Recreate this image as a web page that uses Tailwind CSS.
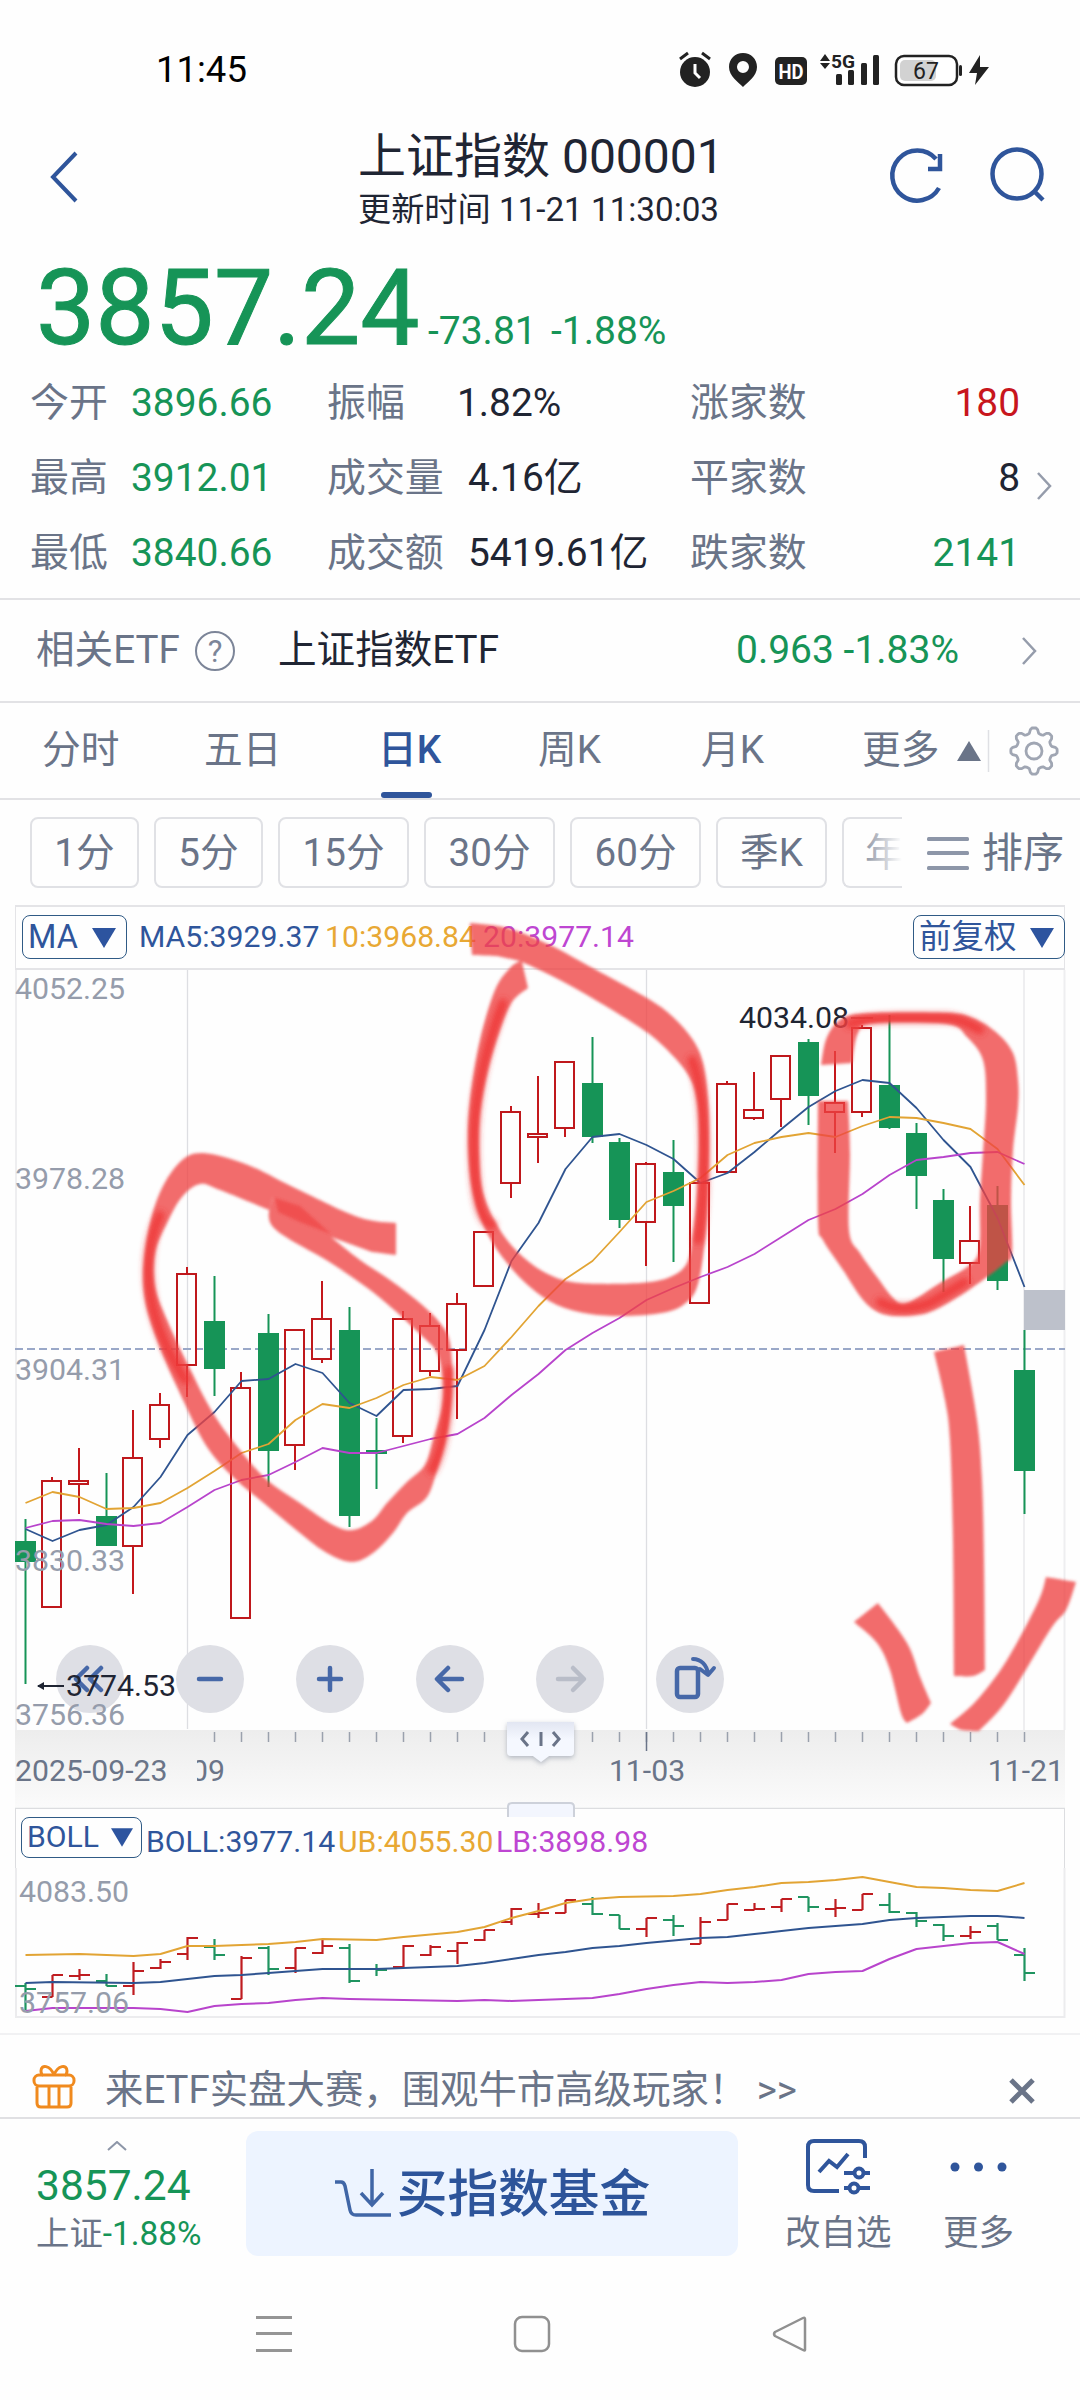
<!DOCTYPE html>
<html lang="zh-CN">
<head>
<meta charset="utf-8">
<title>上证指数 000001</title>
<script src="https://cdn.jsdelivr.net/npm/@tailwindcss/browser@4"></script>
</head>
<body class="bg-white">
<main class="relative w-[1080px] h-[2400px] overflow-hidden bg-[#fefefe] font-['Roboto','Noto_Sans_CJK_SC',sans-serif] text-[#1f2533] whitespace-nowrap flex flex-col">

  <!-- status bar -->
  <header class="h-[124px] pt-[17px] pl-[156px] pr-[88px] flex items-center justify-between shrink-0">
    <span class="text-[36.500px] text-black leading-none">11:45</span>
    <svg class="w-[320px] h-[44px]" viewBox="672 48 320 44" fill="#222">
      <ellipse cx="695" cy="71" rx="15" ry="15"/><path d="M680 58l8-6M710 58l-8-6" stroke="#222" stroke-width="3" fill="none"/><path d="M695 63v9l5 5" stroke="#fff" stroke-width="3" fill="none"/>
      <path fill-rule="evenodd" d="M743 52c-8 0-14 6-14 14 0 9 9 15 14 20 5-5 14-11 14-20 0-8-6-14-14-14zm0 8a6 6 0 1 1 0 12a6 6 0 0 1 0-12z"/>
      <rect x="775" y="56" width="32" height="28" rx="5"/><text x="791" y="78" font-size="21" font-weight="700" fill="#fff" text-anchor="middle" textLength="25" lengthAdjust="spacingAndGlyphs">HD</text>
      <path d="M820 60l5-7 5 7zM820 62l5 6 5-6z"/><text x="831" y="67" font-size="19" font-weight="700" textLength="24" lengthAdjust="spacingAndGlyphs">5G</text>
      <rect x="836" y="73" width="6" height="11" rx="1.500"/><rect x="848" y="69" width="6" height="15" rx="1.500"/><rect x="861" y="62" width="6" height="22" rx="1.500"/><rect x="873" y="54" width="6" height="30" rx="1.500"/>
      <rect x="896" y="55" width="61" height="29" rx="8" fill="#fff" stroke="#222" stroke-width="2.500"/><rect x="900" y="59" width="36" height="21" rx="5" fill="#d2d2d2"/><rect x="959" y="64" width="3" height="11" rx="1.500"/>
      <text x="926" y="78" font-size="23" text-anchor="middle">67</text>
      <path d="M980 54l-11 18h8l-2 12 14-18h-9z"/>
    </svg>
  </header>

  <!-- title bar -->
  <section class="h-[116px] shrink-0 flex items-start pl-[48px] pr-[32px]">
    <svg class="w-[32px] h-[54px] mt-[26px]" viewBox="0 0 32 54" fill="none" stroke="#2f559b" stroke-width="4"><path d="M28 3L5 27l23 24"/></svg>
    <div class="flex flex-col ml-[278px] pt-[2px]">
      <h1 class="text-[48px] leading-[62px]">上证指数 000001</h1>
      <p class="text-[33.200px] leading-[44px]">更新时间 11-21 11:30:03</p>
    </div>
    <svg class="w-[162px] h-[62px] mt-[21px] ml-auto" viewBox="886 144 162 62" fill="none" stroke="#2f559b" stroke-width="4.500"><path d="M936 158A25 25 0 1 0 939 187M940 153v15h-12"/><circle cx="1017" cy="173" r="24.500"/><path d="M1034 190l9 9"/></svg>
  </section>

  <!-- price -->
  <section class="h-[125px] shrink-0 flex items-baseline pl-[36px] text-[#169457]">
    <strong class="text-[105.500px] leading-[136px] font-normal w-[392px] [-webkit-text-stroke:1px_#169457]">3857.24</strong>
    <span class="text-[39px] w-[123px]">-73.81</span><span class="text-[39px]">-1.88%</span>
  </section>

  <!-- quote grid -->
  <section class="relative h-[233px] shrink-0 pl-[30px] pt-px">
    <div class="grid grid-cols-[101px_196px_130px_233px_330px] grid-rows-[75px_75px_75px] items-center text-[38.900px] leading-none text-[#6a7488]">
      <span>今开</span><span class="text-[#169457]">3896.66</span><span>振幅</span><span class="text-[#1f2533]">1.82%</span><div class="flex justify-between"><span>涨家数</span><span class="text-[#c8161d]">180</span></div>
      <span>最高</span><span class="text-[#169457]">3912.01</span><span>成交量</span><span class="text-[#1f2533] pl-[11px]">4.16亿</span><div class="flex justify-between"><span>平家数</span><span class="text-[#1f2533]">8</span></div>
      <span>最低</span><span class="text-[#169457]">3840.66</span><span>成交额</span><span class="text-[#1f2533] pl-[11px]">5419.61亿</span><div class="flex justify-between"><span>跌家数</span><span class="text-[#169457]">2141</span></div>
    </div>
    <svg class="absolute left-[1034px] top-[106px] w-[20px] h-[30px]" viewBox="0 0 20 30" fill="none" stroke="#959cab" stroke-width="2.500"><path d="M4 2l12 13L4 28"/></svg>
  </section>

  <!-- related ETF -->
  <section class="h-[105px] shrink-0 border-y-2 border-[#e2e2e5] flex items-center pl-[36px] pr-[41px] text-[38.600px] leading-none">
    <span class="text-[#6a7488] w-[158px]">相关ETF</span>
    <svg class="w-[42px] h-[42px]" viewBox="0 0 42 42"><circle cx="21" cy="21" r="19" fill="none" stroke="#7c8598" stroke-width="2"/><text x="21" y="32" font-size="31" text-anchor="middle" fill="#7c8598">?</text></svg>
    <span class="ml-[42px]">上证指数ETF</span>
    <span class="ml-auto text-[39px] text-[#169457]">0.963 -1.83%</span>
    <svg class="w-[20px] h-[30px] ml-[60px]" viewBox="0 0 20 30" fill="none" stroke="#959cab" stroke-width="2.500"><path d="M4 2l12 13L4 28"/></svg>
  </section>

  <!-- period tabs -->
  <nav class="h-[97px] shrink-0 border-b-2 border-[#e2e2e5] flex text-[38.700px] leading-[94px] text-[#6a7488]">
    <span class="w-[162px] ml-[42px]">分时</span><span class="w-[174px]">五日</span>
    <span class="relative w-[160px] font-medium text-[#2f559b]">日K<i class="absolute left-[3px] bottom-0 w-[51px] h-[6px] rounded-full bg-[#2f559b]"></i></span>
    <span class="w-[163px]">周K</span><span class="w-[161px]">月K</span><span class="w-[88px]">更多</span>
    <svg class="w-[110px] h-[60px] mt-[18px] shrink-0" viewBox="950 721 110 60" fill="none" stroke="#a0a6b3" stroke-width="2.800">
      <path d="M957 761h24l-12-20z" fill="#6a7488" stroke="none"/><path d="M988.500 730v42" stroke="#dfe0e4" stroke-width="1.500"/>
      <path id="gear" stroke-linejoin="round"/><circle cx="1034" cy="751" r="8"/>
    </svg>
  </nav>

  <!-- minute chips -->
  <section class="relative h-[105px] shrink-0 flex items-center gap-[15px] pl-[30px] text-[38.600px] leading-none text-[#6a7488]">
    <span class="flex w-[109px] h-[71px] pt-[2px] items-center justify-center rounded-lg border-2 border-[#e0e1e5] shrink-0">1分</span>
    <span class="flex w-[109px] h-[71px] pt-[2px] items-center justify-center rounded-lg border-2 border-[#e0e1e5] shrink-0">5分</span>
    <span class="flex w-[131px] h-[71px] pt-[2px] items-center justify-center rounded-lg border-2 border-[#e0e1e5] shrink-0">15分</span>
    <span class="flex w-[131px] h-[71px] pt-[2px] items-center justify-center rounded-lg border-2 border-[#e0e1e5] shrink-0">30分</span>
    <span class="flex w-[131px] h-[71px] pt-[2px] items-center justify-center rounded-lg border-2 border-[#e0e1e5] shrink-0">60分</span>
    <span class="flex w-[111px] h-[71px] pt-[2px] items-center justify-center rounded-lg border-2 border-[#e0e1e5] shrink-0">季K</span>
    <span class="relative flex w-[60px] h-[71px] pt-[2px] items-center pl-[21px] rounded-l-lg border-2 border-r-0 border-[#e0e1e5] shrink-0 overflow-hidden">年<i class="absolute -inset-y-1 right-0 w-[50px] bg-linear-to-r from-[#fefefe]/0 to-[#fefefe]"></i></span>
    <svg class="w-[42px] h-[34px] ml-[10px] shrink-0" viewBox="0 0 42 34" fill="#8d96a8"><rect width="42" height="4" y="1" rx="1.500"/><rect width="42" height="4" y="15" rx="1.500"/><rect width="42" height="4" y="30" rx="1.500"/></svg>
    <span class="text-[41px] -ml-[2px] pt-[2px]">排序</span>
  </section>

  <!-- K-line panel -->
  <section class="h-[65px] mx-[15px] shrink-0 border-t-2 border-x border-b-2 border-[#e4e4e7] flex items-center pl-[6px] pb-[2px] text-[30.200px] leading-none text-[#2f559b]">
    <span class="w-[105px] h-[44px] mt-px pt-px rounded-lg border-[1.500px] border-[#2f5a85] flex items-center justify-between pl-[5px] pr-[10px] text-[32.500px]">MA<svg class="w-[24px] h-[20px]" viewBox="0 0 24 20" fill="#2d549f"><path d="M0 0h24L12 20z"/></svg></span>
    <span class="ml-[12px] w-[186px] pt-[2px]">MA5:3929.37</span><span class="w-[158px] pt-[2px] text-[#e8a834]">10:3968.84</span><span class="pt-[2px] text-[#be46d2]">20:3977.14</span>
    <span class="ml-auto -mr-px w-[152px] h-[44px] mt-px pt-px rounded-lg border-[1.500px] border-[#2f5a85] flex items-center justify-between pl-[5px] pr-[10px] text-[32.500px]">前复权<svg class="w-[24px] h-[20px]" viewBox="0 0 24 20" fill="#2d549f"><path d="M0 0h24L12 20z"/></svg></span>
  </section>
  <svg class="w-[1080px] h-[839px] shrink-0" viewBox="0 970 1080 839">
    <defs>
      <linearGradient id="axis" x2="0" y2="1"><stop stop-color="#ededed"/><stop offset="1" stop-color="#fbfbfb"/></linearGradient>
      <linearGradient id="grip" x2="0" y2="1"><stop stop-color="#e2e6f2"/><stop offset=".45" stop-color="#f5f8ff"/></linearGradient>
      <filter id="shadow" x="-20%" y="-30%" width="140%" height="180%"><feDropShadow dx="0" dy="2" stdDeviation="2.500" flood-color="#8890a0" flood-opacity=".6"/></filter>
      <clipPath id="dateclip"><rect x="197" y="1750" width="60" height="40"/></clipPath>
    </defs>
    <path d="M16 970v760M1064.500 970v760M1024 970v760" stroke="#eeeef0" stroke-width="2"/>
    <path d="M187.500 970v759M646.500 970v759" stroke="#dddee2" stroke-width="1.300"/>
    <path d="M15 1349h1050" stroke="#9aa8c8" stroke-width="2" stroke-dasharray="8 4"/>
    <rect x="1024" y="1290" width="41" height="40" fill="#bdc1cb"/>
    <g id="candles"></g>
    <g fill="none" stroke-width="1.800" stroke-linejoin="round"><path id="ma5" stroke="#2f5490"/><path id="ma10" stroke="#e2a434"/><path id="ma20" stroke="#b844cc"/></g>
    <g fill="#deDFe5"><circle cx="90" cy="1679" r="34"/><circle cx="210" cy="1679" r="34"/><circle cx="330" cy="1679" r="34"/><circle cx="450" cy="1679" r="34"/><circle cx="570" cy="1679" r="34"/><circle cx="690" cy="1679" r="34"/></g>
    <g fill="#959cab" font-size="30.300"><text x="15" y="999">4052.25</text><text x="15" y="1189">3978.28</text><text x="15" y="1380">3904.31</text><text x="15" y="1571">3830.33</text><text x="15" y="1725">3756.36</text></g>
    <g fill="none" stroke="#4668a8" stroke-width="4.500" stroke-linecap="round" stroke-linejoin="round">
      <path d="M87 1668l-11 11 11 11M101 1668l-11 11 11 11M199 1679h22M319 1679h22M330 1668v22M462 1679h-24M448 1668l-11 11 11 11"/>
      <path d="M558 1679h24M573 1668l11 11-11 11" stroke="#b9bdc8"/>
      <rect x="677" y="1668" width="21" height="29" rx="3"/><path d="M693 1659c8 0 14 6 15 15M700 1669l8 6 6-7" stroke-width="4"/>
    </g>
    <g fill="#1f2533" font-size="30.300"><text x="739" y="1028">4034.08</text><text x="66" y="1696">3774.53</text></g>
    <path d="M38 1686h26" stroke="#1f2533" stroke-width="2"/><path d="M37 1686l7-4v8z" fill="#1f2533"/>
    <path d="M851 1018h22" stroke="#7f2d2d" stroke-width="1.500"/>

    <rect x="15" y="1730" width="1050" height="79" fill="url(#axis)"/>
    <path id="ticks" stroke="#9aa1ad" stroke-width="1.500"/><path d="M646.500 1732v19" stroke="#6a7488" stroke-width="1.500"/>
    <g fill="#6a7488" font-size="30.200"><text x="15" y="1781">2025-09-23</text><text x="225" y="1781" text-anchor="end" clip-path="url(#dateclip)">10-09</text><text x="647" y="1781" text-anchor="middle">11-03</text><text x="1064" y="1781" text-anchor="end">11-21</text></g>
    <path d="M15 1808.500h1050" stroke="#dcdde0" stroke-width="1.300"/>
    <path filter="url(#shadow)" fill="url(#grip)" d="M507 1722h67v30q0 4-4 4h-21l-8 6-8-6h-22q-4 0-4-4z"/>
    <path d="M528 1732l-6 7 6 7M541 1732v14M553 1732l6 7-6 7" fill="none" stroke="#6a7488" stroke-width="3"/>
  </svg>

  <!-- BOLL panel -->
  <section class="relative h-[59px] mx-[15px] shrink-0 border-x border-[#dcdde0] flex items-start pl-[5px] text-[30.200px] leading-none text-[#2f559b]">
    <svg class="absolute left-[485px] -top-[8px] w-[80px] h-[16px]" viewBox="0 0 80 16"><path d="M7 16V6q0-4 4-4h58q4 0 4 4v10z" fill="#f3f6fe"/><path d="M7 16V6q0-4 4-4h58q4 0 4 4v10" fill="none" stroke="#cdd1da" stroke-width="2"/></svg>
    <span class="w-[121px] h-[41px] mt-[8px] rounded-lg border-[1.500px] border-[#2f5a85] flex items-center justify-between pl-[5px] pr-[8px]">BOLL<svg class="w-[22px] h-[19px]" viewBox="0 0 24 20" fill="#2d549f"><path d="M0 0h24L12 20z"/></svg></span>
    <span class="ml-[4px] mt-[18px] w-[192px]">BOLL:3977.14</span><span class="mt-[18px] w-[158px] text-[#e8a834]">UB:4055.30</span><span class="mt-[18px] text-[#be46d2]">LB:3898.98</span>
  </section>
  <svg class="w-[1080px] h-[165px] shrink-0" viewBox="0 1868 1080 165">
    <path d="M16 1868v149h1048.500v-149" fill="none" stroke="#ececee" stroke-width="2"/>
    <g id="bars" fill="none" stroke-width="2.200"></g>
    <g fill="none" stroke-width="2" stroke-linejoin="round"><path id="ub" stroke="#e2a434"/><path id="mid" stroke="#2f5490"/><path id="lb" stroke="#b844cc"/></g>
    <g fill="#959cab" font-size="30.300"><text x="19" y="1902">4083.50</text><text x="19" y="2013">3757.06</text></g>
  </svg>

  <!-- promotion -->
  <section class="h-[86px] shrink-0 border-y-2 border-t-[#f1f1f3] border-b-[#e0e0e3] pt-[22px] flex items-start pl-[32px] pr-[44px] text-[38.400px] leading-none text-[#6a7488]">
    <svg class="w-[44px] h-[48px] mt-[6px]" viewBox="32 2063 44 48" fill="none" stroke="#f08a1e" stroke-width="3"><rect x="34" y="2075" width="40" height="11" rx="5"/><path d="M37 2087v16q0 4 4 4h26q4 0 4-4v-16M49 2087v19M59 2087v19M54 2075c-4-10-13-11-13-4 0 2 1 4 2 4M54 2075c4-10 13-11 13-4 0 2-1 4-2 4"/></svg>
    <span class="ml-[29px] mt-[14px]">来ETF实盘大赛，围观牛市高级玩家！ &gt;&gt;</span>
    <svg class="w-[28px] h-[28px] ml-auto mt-[20px]" viewBox="0 0 28 28" stroke="#6a7488" stroke-width="5"><path d="M3 3l22 22M25 3L3 25"/></svg>
  </section>

  <!-- action bar -->
  <section class="h-[137px] shrink-0 flex items-start pl-[36px]">
    <div class="w-[210px] text-[#169457] leading-none pt-[22px]">
      <svg class="w-[20px] h-[10px] ml-[71px]" viewBox="0 0 20 10" fill="none" stroke="#8d96a8" stroke-width="2"><path d="M1 9l9-8 9 8"/></svg>
      <div class="text-[42.500px] leading-[48px] mt-[11px]">3857.24</div>
      <div class="text-[33.400px] leading-[44px] mt-[2px]"><span class="text-[#6a7488]">上证</span>-1.88%</div>
    </div>
    <button class="w-[492px] h-[125px] mt-[12px] pt-[3px] rounded-xl bg-[#edf4ff] flex items-center justify-center text-[50.700px] leading-none font-medium text-[#2d549a]">
      <svg class="w-[58px] h-[50px] mr-[5px] -mt-[4px]" viewBox="332 2168 58 50" fill="none" stroke="#4066a6" stroke-width="3.500"><path d="M333 2182h6q3 0 4 4l5 24q1 5 6 5h35M370 2169v34M359 2193l11 12 11-12"/></svg>买指数基金
    </button>
    <div class="ml-[47px] w-[107px] flex flex-col text-[35.500px] leading-none text-[#6a7488]">
      <svg class="w-[70px] h-[60px] ml-[18px] mt-[18px]" viewBox="803 2138 70 60" fill="none" stroke="#2f559b" stroke-width="4"><path d="M839 2192h-25q-6 0-6-6v-38q0-6 6-6h45q6 0 6 6v11M819 2173l10-11 8 6 11-13"/><circle cx="859" cy="2174" r="4.500"/><path d="M844 2174h10M864 2174h6"/><circle cx="854" cy="2189" r="4.500"/><path d="M844 2189h5M859 2189h11"/></svg>
      <span class="mt-[19px]">改自选</span>
    </div>
    <div class="ml-[51px] flex flex-col text-[35.500px] leading-none text-[#6a7488]">
      <svg class="w-[60px] h-[60px] ml-[5px] mt-[18px]" viewBox="948 2138 60 60" fill="#2f559b"><circle cx="955" cy="2168" r="4.500"/><circle cx="978.500" cy="2168" r="4.500"/><circle cx="1002" cy="2168" r="4.500"/></svg>
      <span class="mt-[19px]">更多</span>
    </div>
  </section>

  <!-- system navigation -->
  <footer class="flex-1 flex justify-between pt-[58px] pl-[256px] pr-[271px]">
    <svg class="w-[36px] h-[40px]" viewBox="0 0 36 40" fill="#959595"><rect y="2" width="36" height="3"/><rect y="18" width="36" height="3"/><rect y="35" width="36" height="3"/></svg>
    <svg class="w-[40px] h-[40px]" viewBox="0 0 40 40" fill="none" stroke="#909090" stroke-width="2.500"><rect x="3" y="3" width="34" height="34" rx="7"/></svg>
    <svg class="w-[38px] h-[40px]" viewBox="0 0 38 40" fill="none" stroke="#909090" stroke-width="2.500" stroke-linejoin="round"><path d="M34 5v31q0 1-2 0L4 22q-2-2 0-4L32 4q2-1 2 1z"/></svg>
  </footer>

  <!-- hand-drawn highlighter marks over the chart -->
  <svg class="absolute left-0 top-[900px] w-[1080px] h-[860px] pointer-events-none" viewBox="0 900 1080 860">
    <defs><filter id="soft" x="-5%" y="-5%" width="110%" height="110%"><feGaussianBlur stdDeviation="1.800"/></filter><filter id="softer" x="-40%" y="-40%" width="180%" height="180%"><feGaussianBlur stdDeviation="3"/></filter></defs>
    <g id="marks" fill="#ee4242" fill-opacity=".78" fill-rule="nonzero" filter="url(#soft)"></g>
    <g fill="none" stroke="#ee3434" stroke-opacity=".85" stroke-width="9" stroke-linecap="round" filter="url(#softer)">
      <path d="M160 1215Q144 1250 150 1292T185 1380M449 1370Q448 1440 432 1470M503 1003Q473 1080 474 1150T492 1225M692 1060Q704 1090 704 1150T698 1240M850 1024Q865 1018 900 1018H948Q962 1019 980 1030M880 1302Q900 1314 930 1303L965 1282"/>
    </g>
    <path d="M275 1198L300 1206 331 1234 300 1222 278 1212z" fill="#ee3c3c" fill-opacity=".6" filter="url(#soft)"/>
  </svg>
</main>
<script>
const X = i => 25.5 + 27 * i;
const el = id => document.getElementById(id);
// direction, high, body top, body bottom, low
const candles = [
['G',1519,1541,1562,1684],['R',1477,1480,1608,1608],['R',1448,1480,1485,1514],['G',1473,1516,1546,1546],['R',1410,1457,1547,1594],['R',1393,1404,1440,1448],['R',1267,1273,1366,1397],['G',1276,1321,1369,1396],['R',1372,1387,1619,1619],['G',1314,1333,1451,1487],['R',1329,1329,1446,1470],['R',1281,1318,1360,1363],['G',1307,1330,1516,1527],['G',1418,1450,1454,1489],['R',1311,1318,1437,1443],['R',1313,1325,1372,1376],['R',1293,1303,1351,1419],['R',1231,1231,1287,1287],['R',1106,1111,1184,1198],['R',1076,1133,1138,1163],['R',1061,1061,1129,1137],['G',1037,1083,1137,1143],['G',1138,1142,1220,1228],['R',1162,1163,1223,1266],['G',1140,1172,1206,1262],['R',1182,1182,1304,1304],['R',1081,1083,1173,1173],['R',1072,1109,1119,1120],['R',1055,1055,1100,1127],['G',1039,1042,1096,1125],['R',1051,1102,1113,1153],['R',1025,1027,1113,1117],['G',1015,1085,1128,1129],['G',1123,1133,1176,1209],['G',1189,1200,1259,1292],['R',1206,1240,1264,1284],['G',1186,1205,1281,1290],['G',1330,1370,1471,1514]];
el('candles').innerHTML = candles.map(([c,h,t,b,l],i) => {
  const x = X(i);
  if (c === 'G') return `<path d="M${x} ${h}V${l}" stroke="#169457" stroke-width="2"/><rect x="${x-10.5}" y="${t}" width="21" height="${b-t}" fill="#169457"/>`;
  const r = x - .5;
  return `<path d="M${r} ${h}V${t}M${r} ${b}V${l}" stroke="#c4181c" stroke-width="2"/><rect x="${r-10}" y="${t+1}" width="19" height="${Math.max(b-t-2,2)}" fill="none" stroke="#bf181c" stroke-width="2"/>`;
}).join('');
const line = (id, ys) => el(id).setAttribute('d', 'M' + ys.map((y,i) => y === 0 ? '' : X(i)+' '+y).filter(Boolean).join('L'));
line('ma5',[1529,1541,1530,1525,1507,1477,1435,1412,1381,1379,1364,1373,1403,1416,1390,1389,1386,1330,1261,1223,1169,1137,1134,1145,1159,1183,1173,1152,1129,1107,1091,1080,1083,1108,1140,1167,1218,1287]);
line('ma10',[1503,1492,1497,1509,1508,1503,1488,1471,1453,1444,1420,1404,1408,1398,1385,1377,1380,1366,1337,1306,1279,1261,1232,1202,1191,1178,1155,1143,1137,1133,1137,1126,1117,1118,1123,1129,1149,1185]);
line('ma20',[1528,1521,1520,1524,1526,1523,1507,1490,1480,1475,1462,1448,1453,1453,1446,1439,1434,1418,1395,1374,1350,1333,1318,1300,1288,1277,1267,1254,1237,1220,1209,1194,1175,1160,1157,1153,1152,1164]);
line('ub',[1955,0,1954,0,1956,1954,1946,1946,1945,1944,1942,1939,0,1940,1937,0,1932,1927,1918,1911,1903,1899,1897,0,1896,1894,1890,1887,1883,1882,1880,1877,1882,1887,1888,1890,1891,1883]);
line('mid',[1983,1982,0,0,1983,1982,1979,1976,1975,1973,1971,1969,0,1969,1968,0,1966,1963,1959,1955,1952,1948,1946,1943,0,1938,1937,1934,1931,1928,1926,1924,1920,1918,1917,1916,1916,1918]);
line('lb',[2011,2008,0,0,2008,2009,2012,2006,2004,2003,2000,1998,1999,0,2000,0,2001,2000,2001,2000,1999,1998,1994,1989,1985,1982,1983,1982,1980,1974,1972,1971,1959,1949,1946,1943,1942,1954]);
// high, low, open, close
const bars = [[1983,2010,1986,1989],[1975,1997,1997,1975],[1969,1980,1976,1975],[1974,1986,1981,1986],[1962,1995,1986,1971],[1959,1969,1968,1962],[1937,1960,1954,1938],[1939,1960,1947,1955],[1956,1999,1999,1958],[1946,1975,1948,1969],[1948,1973,1968,1948],[1940,1954,1953,1946],[1944,1983,1948,1981],[1964,1976,1969,1970],[1945,1968,1967,1946],[1945,1956,1955,1947],[1942,1964,1951,1943],[1930,1941,1940,1930],[1908,1925,1922,1909],[1903,1918,1914,1913],[1900,1913,1913,1900],[1897,1915,1904,1914],[1915,1929,1915,1929],[1918,1937,1929,1918],[1915,1936,1920,1926],[1917,1944,1944,1922],[1904,1920,1920,1904],[1903,1910,1910,1909],[1899,1912,1907,1899],[1897,1912,1897,1907],[1899,1917,1909,1908],[1894,1910,1910,1894],[1893,1913,1905,1912],[1912,1927,1913,1921],[1924,1941,1925,1936],[1926,1939,1936,1932],[1923,1940,1926,1940],[1948,1981,1955,1973]];
el('bars').innerHTML = bars.map(([h,l,o,c],i) => `<path stroke="${candles[i][0]==='G'?'#1f9460':'#bf1c20'}" d="M${X(i)} ${h}V${l}M${X(i)-10.5} ${o}h10.500M${X(i)} ${c}h10.500"/>`).join('');
let t = ''; for (let i = 7; i < 38; i++) t += `M${X(i)} 1732v10`; el('ticks').setAttribute('d', t);
// eight-toothed gear outline
let g = []; for (let a = 0; a <= 360; a += 5) { const r = 20.5 + 2.8*Math.tanh(2.2*Math.cos(a*8*Math.PI/180)), p = a*Math.PI/180; g.push((1034+r*Math.sin(p)).toFixed(1)+' '+(751-r*Math.cos(p)).toFixed(1)); }
el('gear').setAttribute('d', 'M'+g.join('L')+'z');
// smooth curve through points; corners are marked by starting a new run
const run = (p, first) => { let d = (first ? 'M' : 'L') + p[0]; for (let i = 0; i < p.length-1; i++) { const a=p[i-1]||p[i], b=p[i], c=p[i+1], e=p[i+2]||c; d += `C${b[0]+(c[0]-a[0])/6} ${b[1]+(c[1]-a[1])/6} ${c[0]-(e[0]-b[0])/6} ${c[1]-(e[1]-b[1])/6} ${c[0]} ${c[1]}`; } return d; };
const marks = [
 [[[396,1223],[358,1217],[293,1187],[248,1165],[203,1153],[179,1163],[158,1197],[146,1245],[144,1293],[157,1340],[183,1400],[207,1447],[233,1477],[260,1500],[300,1533],[327,1553],[352,1562],[373,1553],[393,1533],[407,1513],[427,1497],[437,1470],[447,1433],[452,1387],[450,1343],[440,1323],[420,1303],[390,1280],[360,1260],[331,1237]],
  [[372,1252],[396,1255]]],
 [[[470,923],[507,928],[550,945],[587,965],[647,998],[673,1017],[693,1040],[703,1063],[708,1100],[709,1150],[707,1217],[703,1257],[697,1287],[687,1302],[667,1312],[627,1316],[590,1314],[557,1305],[530,1287],[507,1263],[487,1233],[473,1193],[468,1147],[470,1100],[480,1040],[495,990],[510,968],[520,961]],[[497,956],[472,955]]],
 [[[821,1065],[827,1037],[843,1018],[873,1013],[947,1013],[973,1018],[997,1033],[1013,1053],[1018,1080],[1018,1107],[1013,1150],[1011,1200],[1012,1253],[1005,1263],[983,1280],[953,1300],[927,1313],[900,1316],[880,1313],[863,1300],[843,1270],[823,1240],[818,1220],[818,1101]],[[848,1101],[850,1153],[849,1230],[860,1253],[877,1277],[893,1298],[903,1304],[917,1298],[940,1283],[967,1267],[979,1250],[980,1200],[983,1153],[986,1100],[983,1060],[967,1037],[947,1024],[873,1023],[858,1033],[852,1063]]],
 [[[934,1352],[964,1345]],[[964,1345],[977,1420],[982,1480],[984,1560],[985,1670]],[[985,1670],[973,1676],[954,1676]],[[954,1676],[953,1540],[950,1440],[945,1400],[934,1352]]],
 [[[854,1622],[878,1603]],[[878,1603],[907,1643],[920,1677],[931,1703]],[[931,1703],[922,1714],[907,1723]],[[907,1723],[901,1713],[890,1670],[877,1643],[854,1622]]],
 [[[950,1724],[962,1730],[979,1731]],[[979,1731],[1007,1700],[1050,1630],[1066,1610],[1076,1582]],[[1076,1582],[1046,1577]],[[1046,1577],[1038,1602],[1007,1660],[977,1700],[950,1724]]]
];
// inner edges of the two closed rings
const holes = [
 [[273,1197],[273,1227],[331,1263],[379,1297],[423,1337],[437,1353],[443,1380],[442,1407],[433,1440],[425,1465],[407,1482],[387,1503],[373,1520],[353,1530],[333,1525],[300,1503],[267,1480],[240,1450],[213,1413],[187,1363],[167,1320],[155,1287],[155,1253],[167,1223],[182,1197],[200,1184],[220,1190],[269,1210]],
 [[528,988],[512,1002],[500,1030],[488,1070],[480,1113],[479,1153],[483,1193],[500,1230],[523,1257],[550,1275],[580,1283],[640,1283],[670,1277],[687,1263],[693,1233],[697,1193],[699,1140],[697,1100],[687,1073],[660,1043],[633,1023],[587,995],[550,975],[522,962]],
 null, null, null, null];
el('marks').innerHTML = marks.map((m,i) => `<path fill-rule="evenodd" d="${m.map((p,k)=>run(p,!k)).join('')}z${holes[i] ? run(holes[i],true)+'z' : ''}"/>`).join('');
</script>
</body>
</html>
